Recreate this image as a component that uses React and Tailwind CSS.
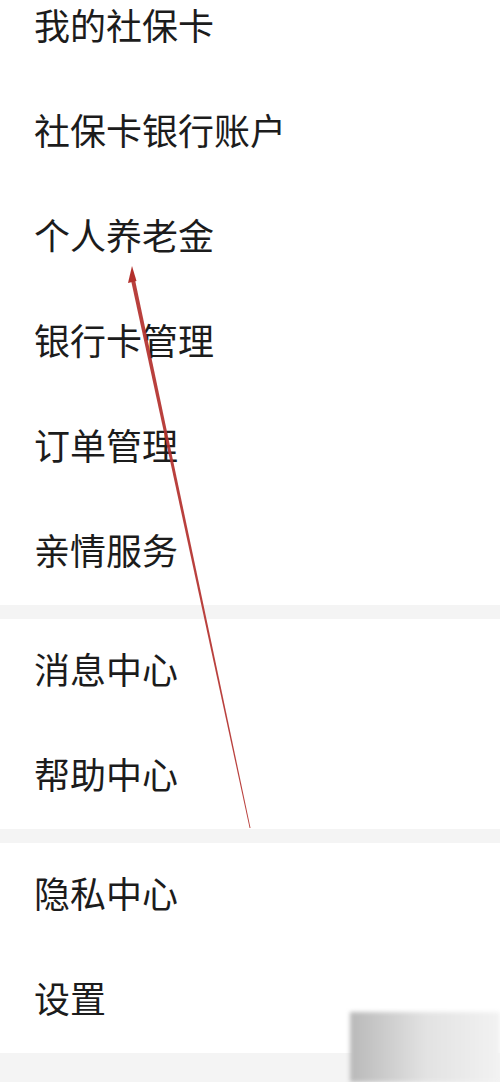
const groups = [
  ['我的社保卡', '社保卡银行账户', '个人养老金', '银行卡管理', '订单管理', '亲情服务'],
  ['消息中心', '帮助中心'],
  ['隐私中心', '设置'],
];

function Row({ label }) {
  return (
    <div className="h-[105px] flex items-center pl-[34px] pb-[7px] bg-white">
      <span className="text-[36px] leading-none text-[#1c1c1c]">{label}</span>
    </div>
  );
}

export default function App() {
  return (
    <div
      className="relative w-[500px] h-[1082px] overflow-hidden bg-[#f4f4f4]"
      style={{ fontFamily: '"Noto Sans CJK SC", "Noto Sans", sans-serif' }}
    >
      <div className="-mt-[25px] flex flex-col gap-[14px]">
        {groups.map((g, i) => (
          <div key={i} className="flex flex-col">
            {g.map(label => (
              <Row key={label} label={label} />
            ))}
          </div>
        ))}
      </div>

      {/* red annotation arrow */}
      <svg className="absolute inset-0 pointer-events-none" width="500" height="1082">
        <polygon points="130.5,278 134.5,277.5 250.5,828 249.6,828" fill="#b3302c" opacity="0.92" />
        <polygon points="132,266 128,283 136.5,281" fill="#b3302c" />
      </svg>

      {/* blurred watermark */}
      <div className="absolute left-[350px] top-[1012px] w-[150px] h-[70px] bg-gradient-to-r from-[#b9b9b9] via-[#e2e2e2] to-[#f2f2f2] blur-[2px]" />
    </div>
  );
}
